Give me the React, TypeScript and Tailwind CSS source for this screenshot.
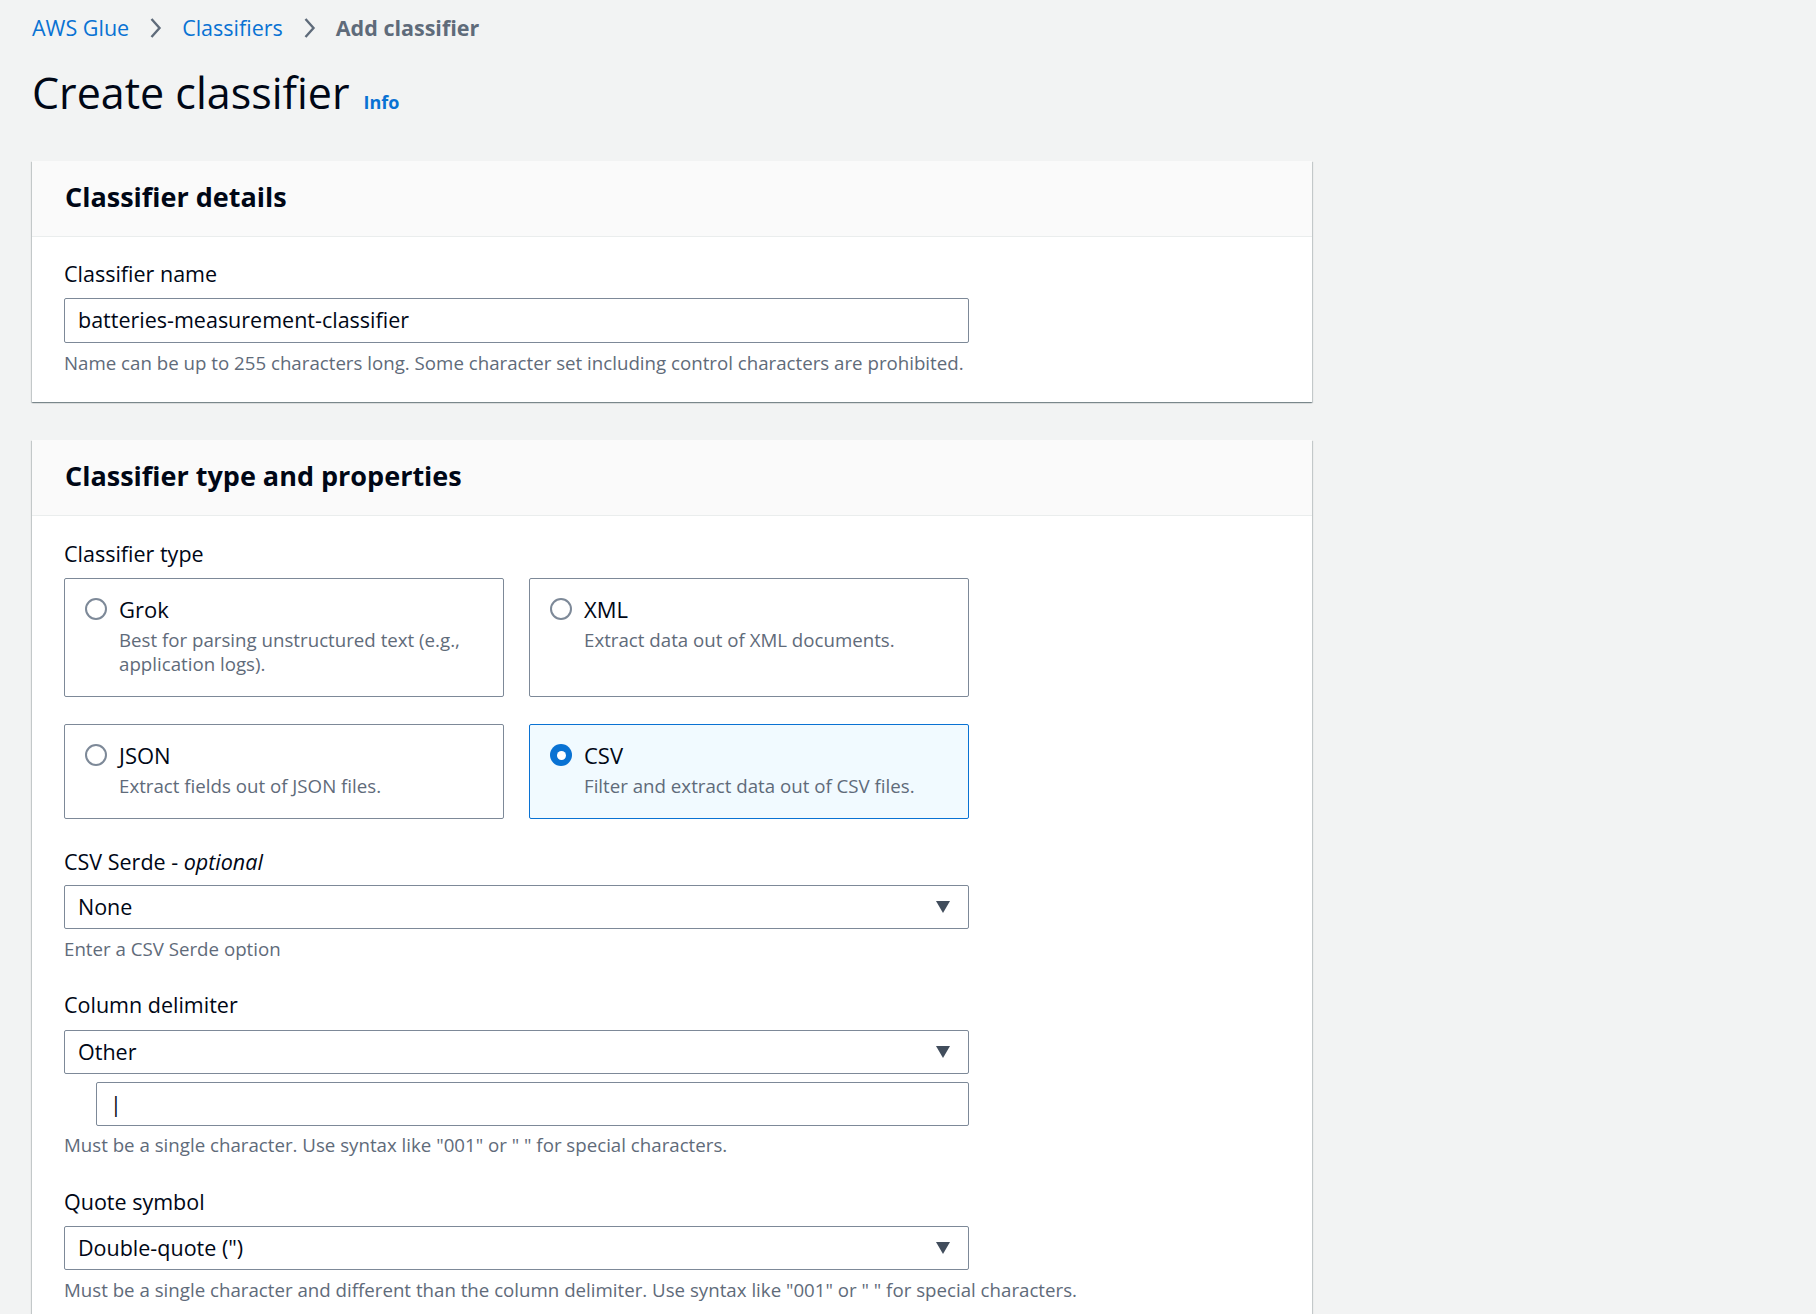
import { useState } from 'react';

const font = { fontFamily: '"Open Sans", "Noto Sans", sans-serif' };

const Caret = () => (
  <svg width="16" height="14" viewBox="0 0 16 14" className="shrink-0">
    <path d="M1 1h14L8 13z" fill="#414d5c" />
  </svg>
);

const Chevron = () => (
  <svg width="13" height="24" viewBox="0 0 13 24" className="mx-[20px]">
    <path d="M2.5 3l8 9-8 9" fill="none" stroke="#5f6b7a" strokeWidth="2.4" />
  </svg>
);

const SelectBox = ({ value }: { value: string }) => (
  <div className="flex h-[44px] w-[905px] items-center justify-between rounded-[2px] border border-[#7d8998] bg-white pl-[13px] pr-[17px] text-[21.5px] text-[#000716]">
    <span>{value}</span>
    <Caret />
  </div>
);

const Label = ({ children }: { children: React.ReactNode }) => (
  <div className="text-[21.5px] leading-[28px] text-[#000716]">{children}</div>
);

const Hint = ({ children, mt = 'mt-[8px]' }: { children: React.ReactNode; mt?: string }) => (
  <div className={`${mt} text-[18.7px] leading-[24px] text-[#5f6b7a]`}>{children}</div>
);

type Tile = { id: string; title: string; desc: string };

const tiles: Tile[] = [
  { id: 'grok', title: 'Grok', desc: 'Best for parsing unstructured text (e.g., application logs).' },
  { id: 'xml', title: 'XML', desc: 'Extract data out of XML documents.' },
  { id: 'json', title: 'JSON', desc: 'Extract fields out of JSON files.' },
  { id: 'csv', title: 'CSV', desc: 'Filter and extract data out of CSV files.' },
];

const Panel = ({ title, children }: { title: string; children: React.ReactNode }) => (
  <section className="w-[1280px] bg-white shadow-[0_1px_1px_0_rgba(0,28,36,0.3),1px_1px_1px_0_rgba(0,28,36,0.15),-1px_1px_1px_0_rgba(0,28,36,0.15)]">
    <div className="border-b border-[#eaeded] bg-[#fafafa] px-[33px] pb-[23px] pt-[20px]">
      <h2 className="text-[27px] font-bold leading-[32px] text-[#000716]">{title}</h2>
    </div>
    <div className="px-[32px]">{children}</div>
  </section>
);

export default function App() {
  const [type, setType] = useState('csv');

  return (
    <div className="min-h-screen bg-[#f2f3f3] px-[32px] pt-[14px]" style={font}>
      <nav className="flex items-center text-[21.5px] leading-[28px]">
        <span className="text-[#0972d3]">AWS Glue</span>
        <Chevron />
        <span className="text-[#0972d3]">Classifiers</span>
        <Chevron />
        <span className="font-bold text-[#5f6b7a]">Add classifier</span>
      </nav>

      <div className="mt-[26px] flex items-baseline">
        <h1 className="text-[43px] leading-[50px] text-[#000716]">Create classifier</h1>
        <span className="ml-[14px] text-[18px] font-bold text-[#0972d3]">Info</span>
      </div>

      <div className="mt-[43px]">
        <Panel title="Classifier details">
          <div className="pb-[27px] pt-[23px]">
            <Label>Classifier name</Label>
            <div className="mt-[10px] flex h-[45px] w-[905px] items-center rounded-[2px] border border-[#7d8998] bg-white px-[13px] text-[21.5px] text-[#000716]">
              batteries-measurement-classifier
            </div>
            <Hint>Name can be up to 255 characters long. Some character set including control characters are prohibited.</Hint>
          </div>
        </Panel>
      </div>

      <div className="mt-[38px]">
        <Panel title="Classifier type and properties">
          <div className="pb-[24px] pt-[24px]">
            <Label>Classifier type</Label>
            <div className="mt-[10px] grid w-[905px] grid-cols-2 gap-x-[25px] gap-y-[27px]">
              {tiles.map((t) => {
                const active = t.id === type;
                return (
                  <button
                    key={t.id}
                    type="button"
                    onClick={() => setType(t.id)}
                    className={`flex items-start rounded-[2px] border pb-[20px] pl-[20px] pr-[20px] pt-[16px] text-left ${
                      active ? 'border-[#0972d3] bg-[#f1faff]' : 'border-[#7d8998] bg-white'
                    }`}
                  >
                    <span
                      className={`mt-[3px] flex h-[22px] w-[22px] shrink-0 items-center justify-center rounded-full ${
                        active ? 'bg-[#0972d3]' : 'border-2 border-[#7d8998] bg-white'
                      }`}
                    >
                      {active && <span className="h-[9px] w-[9px] rounded-full bg-white" />}
                    </span>
                    <span className="ml-[12px]">
                      <span className="block text-[22px] leading-[28px] text-[#000716]">{t.title}</span>
                      <span className="mt-[5px] block text-[18.7px] leading-[24px] text-[#5f6b7a]">{t.desc}</span>
                    </span>
                  </button>
                );
              })}
            </div>

            <div className="mt-[29px]">
              <Label>
                CSV Serde - <i>optional</i>
              </Label>
              <div className="mt-[9px]">
                <SelectBox value="None" />
              </div>
              <Hint>Enter a CSV Serde option</Hint>
            </div>

            <div className="mt-[30px]">
              <Label>Column delimiter</Label>
              <div className="mt-[11px]">
                <SelectBox value="Other" />
              </div>
              <div className="ml-[32px] mt-[8px] flex h-[44px] w-[873px] items-center rounded-[2px] border border-[#7d8998] bg-white px-[13px] text-[21.5px] text-[#000716]">
                |
              </div>
              <Hint mt="mt-[7px]">Must be a single character. Use syntax like "001" or " " for special characters.</Hint>
            </div>

            <div className="mt-[31px]">
              <Label>Quote symbol</Label>
              <div className="mt-[10px]">
                <SelectBox value={'Double-quote (")'} />
              </div>
              <Hint>Must be a single character and different than the column delimiter. Use syntax like "001" or " " for special characters.</Hint>
            </div>
          </div>
        </Panel>
      </div>
    </div>
  );
}
